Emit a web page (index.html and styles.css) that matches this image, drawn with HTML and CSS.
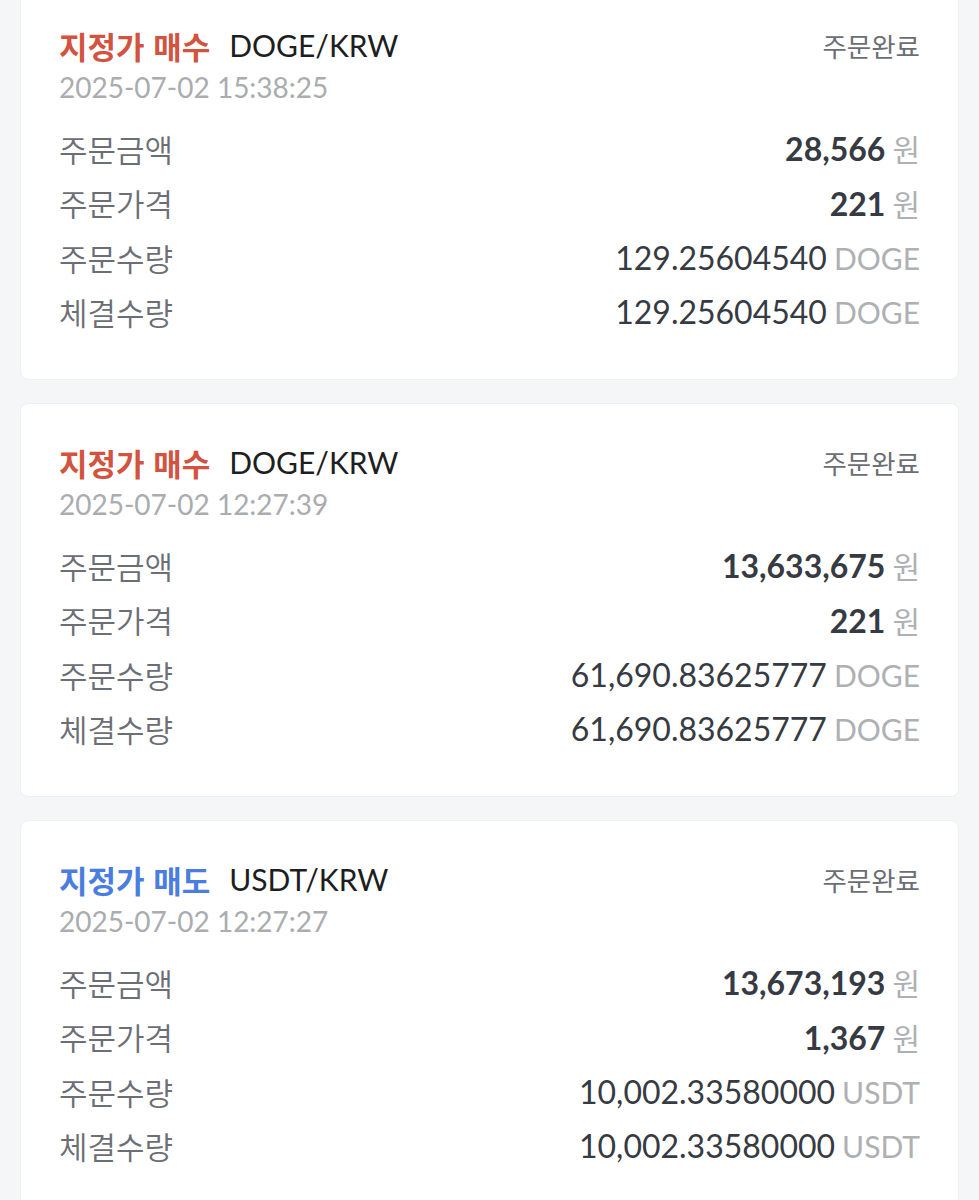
FILE: index.html
```html
<!DOCTYPE html>
<html lang="ko">
<head>
  <meta charset="utf-8">
  <title>주문내역</title>
  <link rel="stylesheet" href="styles.css">
</head>
<body>
  <div class="order-list">
    <div class="order-card">
      <div class="order-head">
        <div class="order-title">
          <span class="side side-buy">지정가 매수</span>
          <span class="market">DOGE/KRW</span>
        </div>
        <span class="order-state">주문완료</span>
      </div>
      <div class="order-time">2025-07-02 15:38:25</div>
      <div class="order-rows">
        <div class="order-row"><span class="label">주문금액</span><span class="value strong">28,566<span class="unit">원</span></span></div>
        <div class="order-row"><span class="label">주문가격</span><span class="value strong">221<span class="unit">원</span></span></div>
        <div class="order-row"><span class="label">주문수량</span><span class="value">129.25604540<span class="unit">DOGE</span></span></div>
        <div class="order-row"><span class="label">체결수량</span><span class="value">129.25604540<span class="unit">DOGE</span></span></div>
      </div>
    </div>

    <div class="order-card">
      <div class="order-head">
        <div class="order-title">
          <span class="side side-buy">지정가 매수</span>
          <span class="market">DOGE/KRW</span>
        </div>
        <span class="order-state">주문완료</span>
      </div>
      <div class="order-time">2025-07-02 12:27:39</div>
      <div class="order-rows">
        <div class="order-row"><span class="label">주문금액</span><span class="value strong">13,633,675<span class="unit">원</span></span></div>
        <div class="order-row"><span class="label">주문가격</span><span class="value strong">221<span class="unit">원</span></span></div>
        <div class="order-row"><span class="label">주문수량</span><span class="value">61,690.83625777<span class="unit">DOGE</span></span></div>
        <div class="order-row"><span class="label">체결수량</span><span class="value">61,690.83625777<span class="unit">DOGE</span></span></div>
      </div>
    </div>

    <div class="order-card">
      <div class="order-head">
        <div class="order-title">
          <span class="side side-sell">지정가 매도</span>
          <span class="market">USDT/KRW</span>
        </div>
        <span class="order-state">주문완료</span>
      </div>
      <div class="order-time">2025-07-02 12:27:27</div>
      <div class="order-rows">
        <div class="order-row"><span class="label">주문금액</span><span class="value strong">13,673,193<span class="unit">원</span></span></div>
        <div class="order-row"><span class="label">주문가격</span><span class="value strong">1,367<span class="unit">원</span></span></div>
        <div class="order-row"><span class="label">주문수량</span><span class="value">10,002.33580000<span class="unit">USDT</span></span></div>
        <div class="order-row"><span class="label">체결수량</span><span class="value">10,002.33580000<span class="unit">USDT</span></span></div>
      </div>
    </div>
  </div>
</body>
</html>
```

FILE: styles.css
```css
body {
  margin: 0;
  background-color: #f5f6f8;
  font-family: Lato, "Noto Sans CJK KR", sans-serif;
  color: #333840;
}

.order-list {
  display: flex;
  flex-direction: column;
  gap: 23px;
  padding: 0 20px;
  margin-top: -14px;
}

.order-card {
  background-color: #fff;
  border: 1px solid #eef0f2;
  border-radius: 8px;
  padding: 38px 38px 40px;
}

.order-head {
  display: flex;
  justify-content: space-between;
  align-items: center;
  height: 40px;
}

.order-title {
  display: flex;
  align-items: center;
  gap: 19px;
}

.side {
  font-family: "Noto Sans CJK KR", sans-serif;
  font-size: 31px;
  font-weight: 700;
}

.side-buy {
  color: #d2533f;
}

.side-sell {
  color: #4a7de0;
}

.market {
  font-size: 30px;
  color: #1c1e22;
}

.order-state {
  font-family: "Noto Sans CJK KR", sans-serif;
  font-size: 26.5px;
  color: #6b6e75;
}

.order-time {
  font-size: 28px;
  line-height: 44px;
  color: #aaacb0;
}

.order-rows {
  margin-top: 12px;
}

.order-row {
  display: flex;
  justify-content: space-between;
  align-items: center;
  height: 54.5px;
}

.label {
  font-family: "Noto Sans CJK KR", sans-serif;
  font-size: 31px;
  font-weight: 350;
  color: #6b6e75;
}

.value {
  font-size: 32px;
  font-weight: 400;
  color: #363a42;
}

.value.strong {
  font-weight: 700;
}

.unit {
  margin-left: 7px;
  font-size: 30px;
  font-weight: 400;
  color: #aeb0b4;
}
```
